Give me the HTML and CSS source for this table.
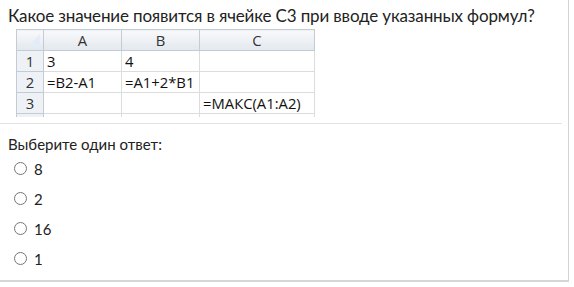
FILE: index.html
```html
<!DOCTYPE html>
<html lang="ru">
<head>
  <meta charset="UTF-8">
  <title>Вопрос</title>
  <link rel="stylesheet" href="styles.css">
</head>
<body>
  <div class="page">
    <div class="question">
      <p class="qtext">Какое значение появится в ячейке С3 при вводе указанных формул?</p>
      <table class="sheet">
        <tr>
          <th class="corner"><span class="tri"></span></th>
          <th class="col-a">A</th>
          <th class="col-b">B</th>
          <th class="col-c">C</th>
        </tr>
        <tr>
          <th class="rownum">1</th>
          <td>3</td>
          <td>4</td>
          <td></td>
        </tr>
        <tr>
          <th class="rownum">2</th>
          <td>=B2-A1</td>
          <td>=A1+2*B1</td>
          <td></td>
        </tr>
        <tr>
          <th class="rownum">3</th>
          <td></td>
          <td></td>
          <td>=МАКС(A1:A2)</td>
        </tr>
        <tr class="cut">
          <th class="rownum"></th>
          <td></td>
          <td></td>
          <td></td>
        </tr>
      </table>
    </div>
    <div class="answers">
      <p class="prompt">Выберите один ответ:</p>
      <label class="option"><input type="radio" name="answer" value="8"> 8</label>
      <label class="option"><input type="radio" name="answer" value="2"> 2</label>
      <label class="option"><input type="radio" name="answer" value="16"> 16</label>
      <label class="option"><input type="radio" name="answer" value="1"> 1</label>
    </div>
  </div>
</body>
</html>
```

FILE: styles.css
```css
body {
  margin: 0;
  font-family: Lato, "Open Sans", sans-serif;
  color: #222;
  background: #fff;
}
.page {
  width: 569px;
  height: 282px;
  border-right: 1px solid #d4d4d4;
  border-bottom: 2px solid #d6d6d6;
  box-sizing: border-box;
}
.question {
  padding: 5px 0 6px 13px;
  margin: 0 6px 0 -5px;
  border-bottom: 1px solid #e2e2e2;
}
.qtext {
  margin: 0;
  font-size: 17px;
  letter-spacing: -0.15px;
  line-height: 22px;
}
.sheet {
  border-collapse: collapse;
  table-layout: fixed;
  width: 298px;
  margin: 2px 0 0 8px;
  font-family: "Open Sans", sans-serif;
  font-size: 14.8px;
  color: #111;
}
.sheet th,
.sheet td {
  border: 1px solid #dadcdd;
  height: 21px;
  padding: 0 3px;
  text-align: left;
  font-weight: normal;
  line-height: 20px;
  box-sizing: border-box;
  white-space: nowrap;
}
.sheet tr:first-child th {
  text-align: center;
  color: #333;
  background: linear-gradient(#f8f9fb, #e3e8ee);
  border-color: #c5cbd3;
}
.sheet .corner {
  width: 27px;
  padding: 0;
  position: relative;
  background: linear-gradient(#c6d8ec, #a8c3e2);
}
.tri {
  position: absolute;
  right: 3px;
  bottom: 3px;
  border-left: 13px solid transparent;
  border-bottom: 13px solid #e4edf7;
}
.sheet .rownum {
  text-align: center;
  color: #333;
  background: #eef2f6;
  border-color: #c5cbd3;
}
.sheet .col-a { width: 78px; }
.sheet .col-b { width: 78px; }
.sheet .col-c { width: 115px; }
.sheet .cut th,
.sheet .cut td {
  height: 3px;
  border-bottom: none;
  line-height: 0;
}
.answers {
  padding: 10px 0 0 8px;
}
.prompt {
  margin: 0;
  font-size: 15px;
  line-height: 20px;
}
.option {
  display: flex;
  align-items: center;
  height: 30px;
  font-size: 15px;
}
.option input {
  margin: 0 7px 0 6px;
  width: 13px;
  height: 13px;
}
```
